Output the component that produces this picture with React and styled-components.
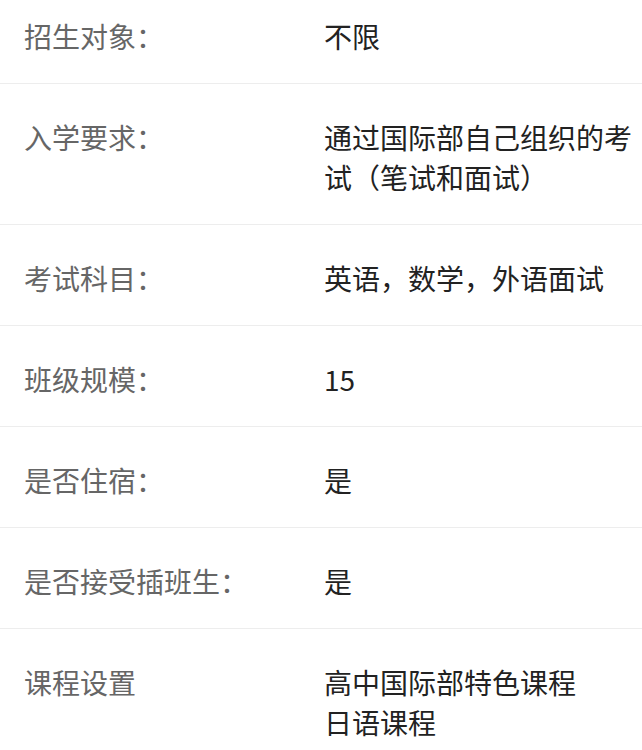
import React from 'react';
import styled, { createGlobalStyle } from 'styled-components';

const GlobalStyle = createGlobalStyle`
	html, body {
		margin: 0;
		padding: 0;
		background: #fff;
	}
	body {
		font-family: "Noto Sans CJK SC", "Noto Sans", sans-serif;
	}
`;

export const InfoList = styled.div`
	width: 642px;
	overflow: hidden;
`;

export const InfoRow = styled.div`
	display: grid;
	grid-template-columns: 300px 1fr;
	padding: 33px 8px 27px 24px;
	border-bottom: 1px solid #ededed;
	font-size: 28px;
	line-height: 40px;

	&:first-child {
		padding-top: 16px;
	}
	&:last-child {
		border-bottom: none;
	}
`;

export const Label = styled.div`
	color: #666;
`;

export const Value = styled.div`
	color: #222;
`;

const rows = [
	{ label: '招生对象：', value: ['不限'] },
	{ label: '入学要求：', value: ['通过国际部自己组织的考试（笔试和面试）'] },
	{ label: '考试科目：', value: ['英语，数学，外语面试'] },
	{ label: '班级规模：', value: ['15'] },
	{ label: '是否住宿：', value: ['是'] },
	{ label: '是否接受插班生：', value: ['是'] },
	{ label: '课程设置', value: ['高中国际部特色课程', '日语课程'] },
];

const App = () => (
	<>
		<GlobalStyle />
		<InfoList>
			{rows.map(row => (
				<InfoRow key={row.label}>
					<Label>{row.label}</Label>
					<Value>
						{row.value.map(line => (
							<div key={line}>{line}</div>
						))}
					</Value>
				</InfoRow>
			))}
		</InfoList>
	</>
);

export default App;
